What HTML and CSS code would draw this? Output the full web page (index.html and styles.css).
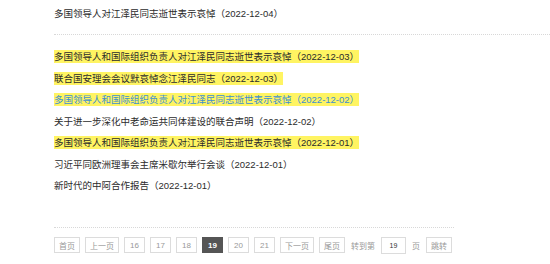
FILE: index.html
```html
<!DOCTYPE html>
<html lang="zh-CN">
<head>
  <meta charset="UTF-8">
  <title>新闻列表</title>
  <link rel="stylesheet" href="styles.css">
</head>
<body>

  <div class="news">
    <p class="news-top"><a href="#">多国领导人对江泽民同志逝世表示哀悼（2022-12-04）</a></p>

    <ul class="news-list">
      <li><a href="#" class="hl">多国领导人和国际组织负责人对江泽民同志逝世表示哀悼（2022-12-03）</a></li>
      <li><a href="#" class="hl">联合国安理会会议默哀悼念江泽民同志（2022-12-03）</a></li>
      <li><a href="#" class="hl blue">多国领导人和国际组织负责人对江泽民同志逝世表示哀悼（2022-12-02）</a></li>
      <li><a href="#">关于进一步深化中老命运共同体建设的联合声明（2022-12-02）</a></li>
      <li><a href="#" class="hl">多国领导人和国际组织负责人对江泽民同志逝世表示哀悼（2022-12-01）</a></li>
      <li><a href="#">习近平同欧洲理事会主席米歇尔举行会谈（2022-12-01）</a></li>
      <li><a href="#">新时代的中阿合作报告（2022-12-01）</a></li>
    </ul>

    <div class="pager">
      <a href="#" class="page">首页</a>
      <a href="#" class="page">上一页</a>
      <a href="#" class="page num">16</a>
      <a href="#" class="page num">17</a>
      <a href="#" class="page num">18</a>
      <span class="page num current">19</span>
      <a href="#" class="page num">20</a>
      <a href="#" class="page num">21</a>
      <a href="#" class="page">下一页</a>
      <a href="#" class="page">尾页</a>
      <span class="pager-text">转到第</span>
      <input type="text" class="pager-input" value="19">
      <span class="pager-text">页</span>
      <button class="page">跳转</button>
    </div>
  </div>

</body>
</html>
```

FILE: styles.css
```css
body {
  margin: 0;
  background-color: #fff;
  color: #333;
  font-family: 'Liberation Sans', 'Noto Sans CJK SC', sans-serif;
}

a {
  color: #2b2b2b;
  text-decoration: none;
}

.news {
  padding-left: 54px;
}

.news-top {
  margin: 0;
  padding-top: 3px;
  padding-bottom: 9px;
  font-size: 9.5px;
  line-height: 22px;
  border-bottom: 1px dotted #d8d8d8;
}

.news-list {
  list-style: none;
  margin: 11px 0 0;
  padding: 0;
  font-size: 9.5px;
  line-height: 21.5px;
}

.news-list .hl {
  background-color: #fff462;
  padding: 1px 0;
}

.news-list .blue {
  color: #3d8fd1;
}

.pager {
  width: 400px;
  margin-top: 30px;
  padding-top: 9px;
  border-top: 1px dotted #d8d8d8;
  display: flex;
  align-items: center;
  gap: 5px;
  font-size: 8px;
  white-space: nowrap;
}

.page {
  box-sizing: border-box;
  flex-shrink: 0;
  height: 16px;
  min-width: 21px;
  padding: 0 4px;
  border: 1px solid #dcdcdc;
  background: #fff;
  color: #999;
  font-family: inherit;
  font-size: 8px;
  display: flex;
  align-items: center;
  justify-content: center;
}

.page.current {
  background-color: #555;
  border-color: #555;
  color: #fff;
  font-weight: bold;
}

.pager-text {
  flex-shrink: 0;
  color: #999;
  margin: 0 1px;
}

.pager-input {
  box-sizing: border-box;
  flex-shrink: 0;
  width: 25px;
  height: 17px;
  border: 1px solid #dcdcdc;
  padding: 0;
  text-align: center;
  font-family: inherit;
  font-size: 7px;
  color: #333;
}
```
